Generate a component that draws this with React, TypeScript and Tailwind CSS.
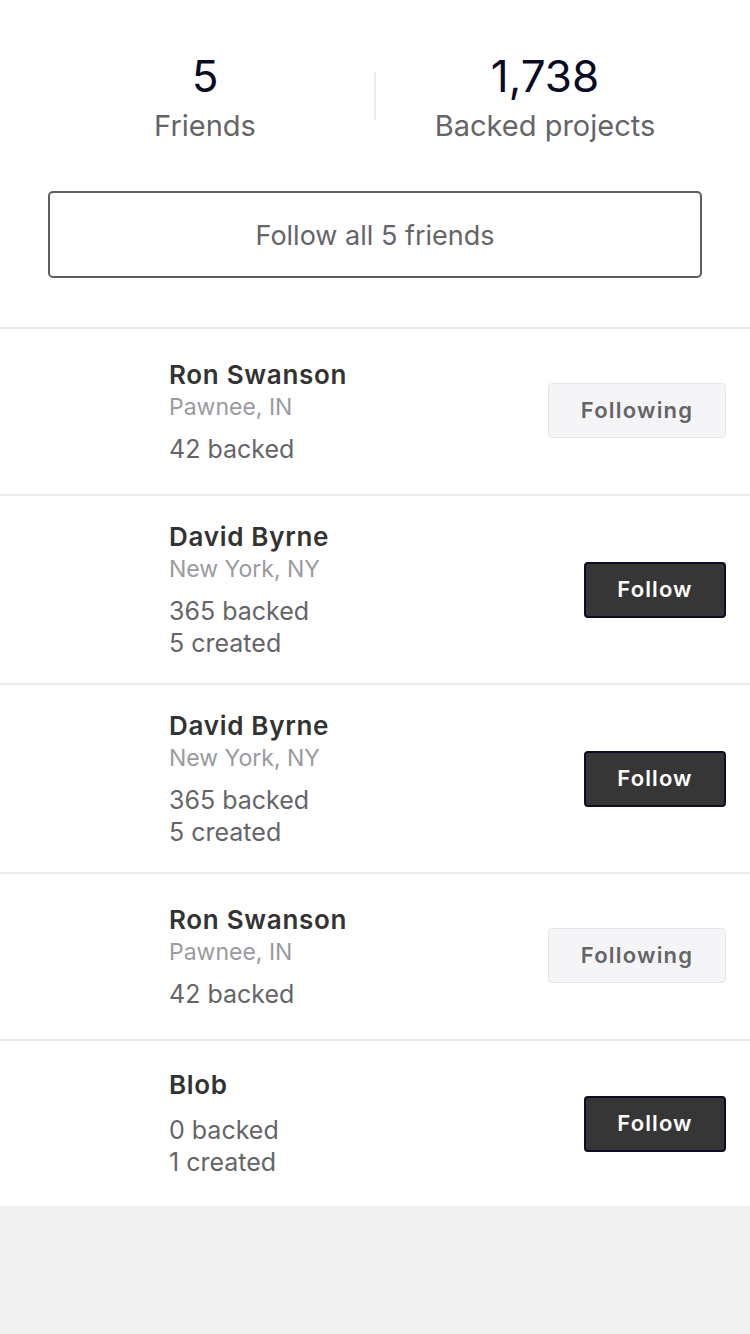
const friends = [
  { name: "Ron Swanson", location: "Pawnee, IN", backed: 42, created: 0, following: true },
  { name: "David Byrne", location: "New York, NY", backed: 365, created: 5, following: false },
  { name: "David Byrne", location: "New York, NY", backed: 365, created: 5, following: false },
  { name: "Ron Swanson", location: "Pawnee, IN", backed: 42, created: 0, following: true },
  { name: "Blob", location: "", backed: 0, created: 1, following: false },
];

type Friend = (typeof friends)[number];

function FriendRow({ f }: { f: Friend }) {
  const tall = f.location && f.created > 0;
  return (
    <div
      className={`flex items-center border-t-2 border-[#ebebeb] bg-white pl-[169px] pr-[24px] ${
        tall ? "h-[189px]" : "h-[167px]"
      }`}
    >
      <div className="flex-1 flex flex-col">
        <div className="text-[26px] leading-[32px] font-semibold tracking-[0.7px] text-[#333333]">{f.name}</div>
        {f.location && (
          <div className="text-[23px] leading-[32px] text-[#9a9aa0]">{f.location}</div>
        )}
        <div className={`${f.location ? "mt-[10px]" : "mt-[13px]"} text-[25px] leading-[32px] text-[#656569]`}>
          {f.backed} backed
        </div>
        {f.created > 0 && (
          <div className="text-[25px] leading-[32px] text-[#656569]">{f.created} created</div>
        )}
      </div>
      {f.following ? (
        <button className="w-[178px] h-[55px] mb-[2px] rounded-[4px] border border-[#e6e6ea] bg-[#f5f5f7] text-[22px] font-semibold tracking-[1.2px] text-[#656569]">
          Following
        </button>
      ) : (
        <button className="w-[142px] h-[56px] rounded-[4px] border-2 border-[#0d0d24] bg-[#363636] text-[22px] font-semibold tracking-[1.1px] text-white">
          Follow
        </button>
      )}
    </div>
  );
}

export default function App() {
  return (
    <div className="min-h-[1334px] bg-[#f0f0f0] font-['Inter',sans-serif]">
      <div className="bg-white">
        <div className="flex px-[36px] pt-[50px]">
          <div className="flex-1 flex flex-col items-center">
            <div className="text-[44px] leading-[52px] text-[#0a0a23]">5</div>
            <div className="mt-[6px] text-[29px] leading-[36px] text-[#656569]">Friends</div>
          </div>
          <div className="w-[2px] h-[48px] mt-[22px] bg-[#ebebeb]" />
          <div className="flex-1 flex flex-col items-center">
            <div className="text-[44px] leading-[52px] text-[#0a0a23]">1,738</div>
            <div className="mt-[6px] text-[29px] leading-[36px] text-[#656569]">Backed projects</div>
          </div>
        </div>
        <div className="px-[48px] pt-[47px] pb-[49px]">
          <button className="w-full h-[87px] pt-[4px] rounded-[5px] border-2 border-[#5d5d63] text-[27px] text-[#656569]">
            Follow all 5 friends
          </button>
        </div>
        {friends.map((f, i) => (
          <FriendRow key={i} f={f} />
        ))}
      </div>
    </div>
  );
}
